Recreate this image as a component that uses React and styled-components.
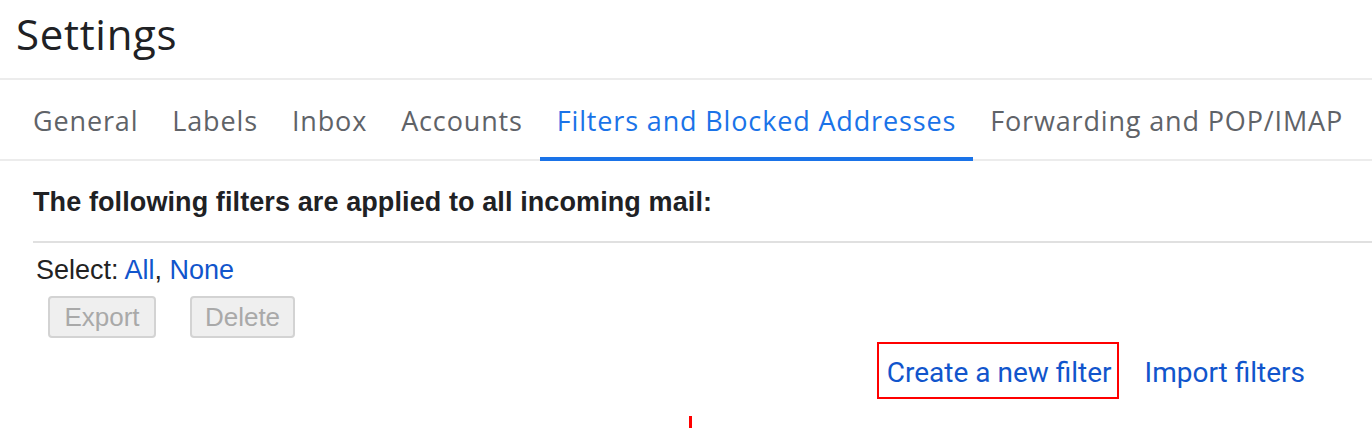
import React from "react"
import styled, { createGlobalStyle } from "styled-components"

const GlobalStyle = createGlobalStyle`
  html, body {
    margin: 0;
    padding: 0;
    background: #fff;
  }
  body {
    font-family: "Liberation Sans", Arial, sans-serif;
    color: #202124;
    overflow: hidden;
  }
`

const Page = styled.div`
  position: relative;
  width: 1372px;
  height: 428px;
  overflow: hidden;
`

const Header = styled.div`
  height: 80px;
  padding-left: 16px;
  display: flex;
  align-items: center;
  border-bottom: 2px solid #ececec;
  box-sizing: border-box;
  h1 {
    margin: 0;
    margin-top: -12px;
    font-family: "Open Sans", sans-serif;
    font-weight: 400;
    font-size: 42px;
    color: #202124;
    letter-spacing: 0.7px;
  }
`

const TabBar = styled.div`
  display: flex;
  height: 81px;
  padding-left: 16px;
  border-bottom: 2px solid #ececec;
  box-sizing: border-box;
`

const Tab = styled.div`
  display: flex;
  align-items: center;
  padding: 4px 17px 0;
  font-family: "Open Sans", sans-serif;
  font-size: 27px;
  letter-spacing: 0.85px;
  color: ${(p) => (p.$active ? "#1a73e8" : "#5f6368")};
  border-bottom: 4px solid ${(p) => (p.$active ? "#1a73e8" : "transparent")};
  margin-bottom: -2px;
  white-space: nowrap;
`

const Content = styled.div`
  padding-left: 33px;
`

const Heading = styled.div`
  font-weight: 700;
  font-size: 27px;
  letter-spacing: 0.1px;
  padding: 26px 0 0;
  height: 54px;
  border-bottom: 2px solid #e0e0e0;
`

const SelectRow = styled.div`
  padding: 12px 0 0 3px;
  font-size: 27px;
  height: 41px;
  color: #222;
`

const Link = styled.a`
  color: #1155cc;
  text-decoration: none;
  cursor: pointer;
`

const ButtonRow = styled.div`
  display: flex;
  gap: 34px;
  padding-left: 15px;
`

const Button = styled.button`
  width: ${(p) => p.$w}px;
  height: 42px;
  font-family: "Liberation Sans", Arial, sans-serif;
  font-size: 26px;
  color: #a9a9a9;
  background: #efefef;
  border: 2px solid #d3d3d3;
  border-radius: 4px;
  padding: 0;
`

const Actions = styled.div`
  display: flex;
  justify-content: flex-end;
  align-items: baseline;
  gap: 28px;
  padding: 4px 67px 0 0;
  font-family: Roboto, sans-serif;
  font-size: 28px;
`

const Highlight = styled.div`
  border: 2px solid #ff0000;
  padding: 3px 5px 0 8px;
  height: 57px;
  margin-right: -2px;
  display: flex;
  align-items: center;
  box-sizing: border-box;
`

const Marker = styled.div`
  position: absolute;
  left: 689px;
  top: 416px;
  width: 3px;
  height: 12px;
  background: #ff0000;
`

const tabs = [
  "General",
  "Labels",
  "Inbox",
  "Accounts",
  "Filters and Blocked Addresses",
  "Forwarding and POP/IMAP",
]

export default function App() {
  return (
    <Page>
      <GlobalStyle />
      <Header>
        <h1>Settings</h1>
      </Header>
      <TabBar>
        {tabs.map((t) => (
          <Tab key={t} $active={t === "Filters and Blocked Addresses"}>
            {t}
          </Tab>
        ))}
      </TabBar>
      <Content>
        <Heading>The following filters are applied to all incoming mail:</Heading>
        <SelectRow>
          Select: <Link>All</Link>, <Link>None</Link>
        </SelectRow>
        <ButtonRow>
          <Button $w={108} disabled>Export</Button>
          <Button $w={105} disabled>Delete</Button>
        </ButtonRow>
      </Content>
      <Actions>
        <Highlight>
          <Link>Create a new filter</Link>
        </Highlight>
        <Link>Import filters</Link>
      </Actions>
      <Marker />
    </Page>
  )
}
